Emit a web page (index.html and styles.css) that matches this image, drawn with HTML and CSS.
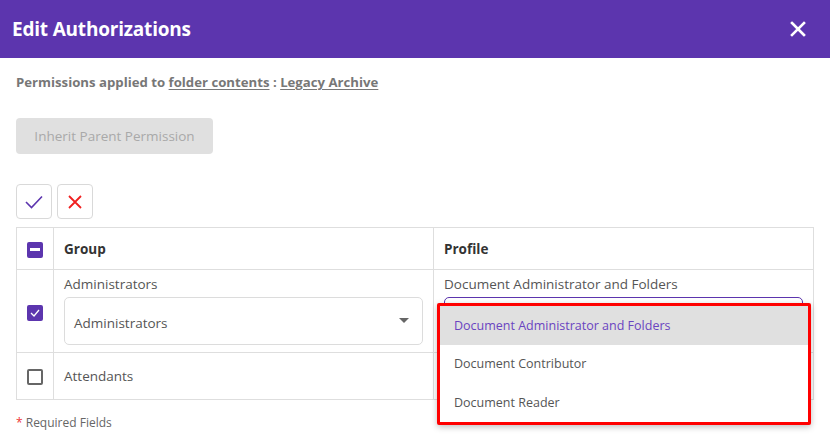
FILE: index.html
```html
<!DOCTYPE html>
<html>
<head>
<meta charset="utf-8">
<link rel="stylesheet" href="styles.css">
</head>
<body>
<div class="header">
  <div class="title">Edit Authorizations</div>
  <button class="close" aria-label="Close">
    <svg width="16" height="16" viewBox="0 0 16 16"><path d="M2 2 L14 14 M14 2 L2 14" stroke="#fff" stroke-width="2.6" stroke-linecap="square"/></svg>
  </button>
</div>
<div class="content">
  <div class="subtitle">Permissions applied to <u>folder contents</u> : <u>Legacy Archive</u></div>
  <button class="inherit">Inherit Parent Permission</button>
  <div class="actions">
    <button class="icon-btn"><svg width="18" height="14" viewBox="0 0 18 14"><path d="M1 7 L6.5 12.5 L17 1.5" fill="none" stroke="#5c35ae" stroke-width="1.6"/></svg></button>
    <button class="icon-btn"><svg width="14" height="14" viewBox="0 0 14 14"><path d="M1 1 L13 13 M13 1 L1 13" fill="none" stroke="#f02020" stroke-width="1.8"/></svg></button>
  </div>
  <table class="grid">
    <thead>
      <tr>
        <th class="c-check"><span class="cb cb-on"><span class="dash"></span></span></th>
        <th class="c-group">Group</th>
        <th class="c-profile">Profile</th>
      </tr>
    </thead>
    <tbody>
      <tr class="row-edit">
        <td class="c-check"><span class="cb cb-on"><svg width="10" height="8" viewBox="0 0 10 8"><path d="M1 4 L4 7 L9 1" fill="none" stroke="#fff" stroke-width="1.3"/></svg></span></td>
        <td class="c-group">
          <div class="label">Administrators</div>
          <div class="select">
            <span>Administrators</span>
            <span class="caret"></span>
          </div>
        </td>
        <td class="c-profile">
          <div class="label">Document Administrator and Folders</div>
          <div class="select select-active"></div>
          <div class="menu">
            <div class="item item-active">Document Administrator and Folders</div>
            <div class="item">Document Contributor</div>
            <div class="item">Document Reader</div>
          </div>
        </td>
      </tr>
      <tr class="row-plain">
        <td class="c-check"><span class="cb"></span></td>
        <td class="c-group">Attendants</td>
        <td class="c-profile"></td>
      </tr>
    </tbody>
  </table>
  <div class="required"><span class="star">*</span> Required Fields</div>
</div>
</body>
</html>
```

FILE: styles.css
```css
* { box-sizing: border-box; }
body {
  margin: 0;
  font-family: "Open Sans", "Noto Sans", sans-serif;
  color: #555;
  background: #fff;
  width: 830px;
  height: 438px;
  overflow: hidden;
}
button { font-family: inherit; }
.header {
  height: 58px;
  background: #5c35ae;
  display: flex;
  align-items: center;
  justify-content: space-between;
  padding: 0 24px 0 12px;
}
.title {
  color: #fff;
  font-size: 19px;
  font-weight: 700;
  letter-spacing: -0.2px;
}
.close {
  background: none;
  border: 0;
  padding: 0;
  width: 16px;
  height: 16px;
  display: flex;
}
.content { padding: 0 16px; }
.subtitle {
  margin-top: 15px;
  font-size: 13.2px;
  font-weight: 700;
  color: #777;
  line-height: 18px;
}
.subtitle u { text-underline-offset: 2px; }
.inherit {
  margin-top: 27px;
  display: block;
  width: 197px;
  height: 36px;
  border: 0;
  border-radius: 4px;
  background: #e0e0e0;
  color: #a9a9a9;
  font-size: 13.5px;
  padding: 0;
}
.actions {
  margin-top: 30px;
  display: flex;
  gap: 5px;
}
.icon-btn {
  width: 36px;
  height: 35px;
  border: 1px solid #d9d9d9;
  border-radius: 4px;
  background: #fff;
  display: flex;
  align-items: center;
  justify-content: center;
  padding: 0;
}
.grid {
  margin-top: 8px;
  width: 797px;
  border-collapse: collapse;
  table-layout: fixed;
  font-size: 13.5px;
}
.grid th, .grid td {
  border: 1px solid #dedede;
  text-align: left;
  vertical-align: middle;
}
.grid th {
  height: 42px;
  font-weight: 700;
  color: #333;
  padding: 0 10px;
}
.c-check { width: 37px; padding: 0 !important; text-align: center !important; }
.c-group { width: 380px; }
.c-profile { width: 380px; }
.cb {
  display: inline-flex;
  width: 16px;
  height: 16px;
  border: 2px solid #666;
  border-radius: 2px;
  vertical-align: middle;
  align-items: center;
  justify-content: center;
}
.cb-on { background: #5c35ae; border-color: #5c35ae; }
.dash { width: 10px; height: 2.5px; background: #fff; }
.row-edit td { height: 82px; padding: 5px 10px 7px; vertical-align: top; }
.row-edit td.c-check { vertical-align: middle; }
.row-edit .c-check .cb { margin-top: 2px; }
.label { line-height: 18px; color: #555; }
.select {
  margin-top: 4px;
  height: 48px;
  border: 1px solid #dcdcdc;
  border-radius: 5px;
  display: flex;
  align-items: center;
  justify-content: space-between;
  padding: 4px 13px 0 9px;
  color: #555;
}
.caret {
  width: 0; height: 0;
  border-left: 5.5px solid transparent;
  border-right: 5.5px solid transparent;
  border-top: 5px solid #666;
  margin-top: -6px;
}
.c-profile { position: relative; }
.select-active {
  border: 1.5px solid #5c35ae;
}
.menu {
  position: absolute;
  left: 3px;
  top: 33px;
  width: 374px;
  background: #fff;
  border: 3px solid #ff0000;
  border-radius: 2px;
  box-shadow: 0 2px 6px rgba(0,0,0,0.25);
  z-index: 5;
}
.item {
  height: 38.5px;
  display: flex;
  align-items: center;
  padding-left: 14px;
  font-size: 12.5px;
  color: #555;
}
.item-active { background: #e0e0e0; color: #6a44c0; }
.row-plain td { height: 47px; padding: 0 10px; }
.required {
  margin-top: 14px;
  font-size: 12px;
  color: #666;
}
.star { color: #e33; }
```
